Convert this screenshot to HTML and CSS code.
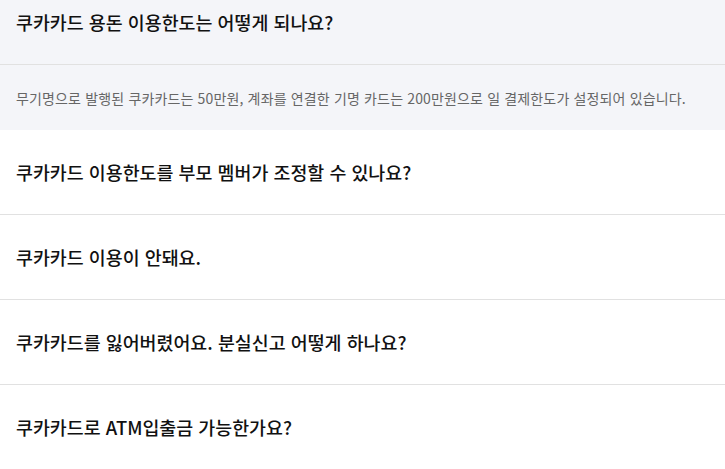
FILE: index.html
```html
<!DOCTYPE html>
<html lang="ko">
<head>
    <meta charset="UTF-8">
    <meta name="viewport" content="width=device-width, initial-scale=1.0">
    <title>쿠카카드 자주 묻는 질문</title>
    <link rel="stylesheet" href="styles.css">
</head>
<body>
    <ul class="faq-list">
        <li class="faq-item open">
            <div class="faq-question">쿠카카드 용돈 이용한도는 어떻게 되나요?</div>
            <div class="faq-answer">
                무기명으로 발행된 쿠카카드는 50만원, 계좌를 연결한 기명 카드는 200만원으로 일 결제한도가 설정되어 있습니다.
            </div>
        </li>
        <li class="faq-item">
            <div class="faq-question">쿠카카드 이용한도를 부모 멤버가 조정할 수 있나요?</div>
        </li>
        <li class="faq-item">
            <div class="faq-question">쿠카카드 이용이 안돼요.</div>
        </li>
        <li class="faq-item">
            <div class="faq-question">쿠카카드를 잃어버렸어요. 분실신고 어떻게 하나요?</div>
        </li>
        <li class="faq-item">
            <div class="faq-question">쿠카카드로 ATM입출금 가능한가요?</div>
        </li>
    </ul>
</body>
</html>
```

FILE: styles.css
```css
* {
    margin: 0;
    padding: 0;
    box-sizing: border-box;
}

body {
    font-family: "Noto Sans CJK KR", "Noto Sans", sans-serif;
    background: #fff;
    color: #111;
}

.faq-list {
    list-style: none;
}

.faq-item {
    border-bottom: 1px solid #e1e1e1;
}

.faq-item.open {
    background: #f4f5f9;
    border-bottom: none;
}

.faq-question {
    height: 84px;
    display: flex;
    align-items: center;
    padding: 0 16px;
    font-size: 18.4px;
    font-weight: 500;
}

.faq-item.open .faq-question {
    height: 65px;
    padding-bottom: 20px;
    border-bottom: 1px solid #e1e1e1;
}

.faq-answer {
    height: 65px;
    display: flex;
    align-items: center;
    padding: 0 16px;
    font-size: 14px;
    color: #666;
    letter-spacing: 0.15px;
}
```
